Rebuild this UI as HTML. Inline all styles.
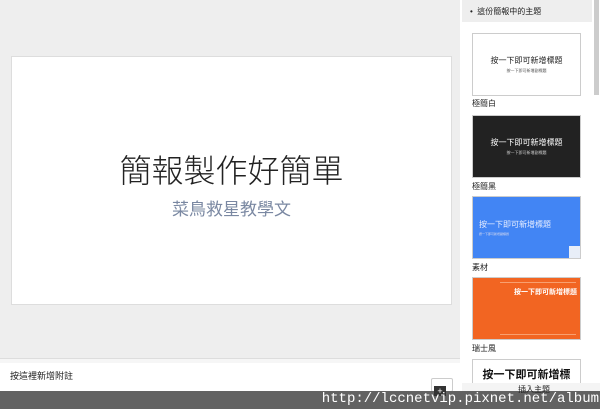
<!DOCTYPE html>
<html><head><meta charset="utf-8"><style>
*{margin:0;padding:0;box-sizing:border-box}
body{width:600px;height:409px;overflow:hidden;position:relative;background:#eee;font-family:"Liberation Sans","Noto Sans CJK TC",sans-serif}
.abs{position:absolute}
.th{position:absolute;left:472px;width:109px;height:63px;border:1px solid #ccc;display:flex;flex-direction:column;align-items:center;justify-content:center}
.lbl{position:absolute;left:472px;font-size:8px;color:#222}
</style></head><body>
<div class="abs" style="left:0;top:0;width:460px;height:362px;background:#eee"></div>
<div class="abs" style="left:11px;top:56px;width:441px;height:249px;background:#fff;border:1px solid #ddd"></div>
<div class="abs" style="left:11px;top:148px;width:441px;text-align:center;font-size:32px;color:#222;font-family:'Noto Sans CJK TC',sans-serif;font-weight:300;line-height:42px">簡報製作好簡單</div>
<div class="abs" style="left:11px;top:198px;width:441px;text-align:center;font-size:17px;color:#7a88a2;line-height:24px">菜鳥救星教學文</div>
<div class="abs" style="left:0;top:358px;width:460px;height:5px;background:#f6f6f6;border-top:1px solid #ddd"></div>
<div class="abs" style="left:0;top:363px;width:460px;height:28px;background:#fff"></div>
<div class="abs" style="left:10px;top:369px;font-size:9px;color:#222">按這裡新增附註</div>
<div class="abs" style="left:431px;top:378px;width:22px;height:14px;background:#fff;border:1px solid #ccc;border-radius:2px"></div>
<div class="abs" style="left:460px;top:0;width:140px;height:392px;background:#fff"></div>
<div class="abs" style="left:462px;top:0;width:130px;height:22px;background:#eee"></div>
<div class="abs" style="left:470px;top:6px;font-size:8px;color:#222">•&nbsp; 這份簡報中的主題</div>
<div class="abs" style="left:594px;top:0;width:5px;height:95px;background:#ccc"></div>
<div class="th" style="top:33px;background:#fff"><div style="font-size:8px;color:#222">按一下即可新增標題</div><div style="font-size:4px;color:#555;margin-top:2px">按一下即可新增副標題</div></div>
<div class="lbl" style="top:98px">極簡白</div>
<div class="th" style="top:115px;background:#222"><div style="font-size:8px;color:#fff">按一下即可新增標題</div><div style="font-size:4px;color:#ccc;margin-top:2px">按一下即可新增副標題</div></div>
<div class="lbl" style="top:181px">極簡黑</div>
<div class="th" style="top:196px;background:#4285f4;align-items:flex-start;padding-left:6px"><div style="font-size:8px;color:#e8eeff">按一下即可新增標題</div><div style="font-size:3px;color:#dde;margin-top:2px">按一下即可新增副標題</div></div>
<div class="abs" style="left:569px;top:246px;width:11px;height:12px;background:#e8eef8"></div>
<div class="lbl" style="top:262px">素材</div>
<div class="th" style="top:277px;background:#f26522;align-items:flex-start;padding-left:41px;justify-content:flex-start;padding-top:9px"><div style="font-size:7px;color:#fff;font-weight:bold;white-space:nowrap">按一下即可新增標題</div></div>
<div class="abs" style="left:500px;top:282px;width:76px;height:1px;background:#f8a070"></div>
<div class="abs" style="left:500px;top:334px;width:76px;height:1px;background:#f8a070"></div>
<div class="lbl" style="top:343px">瑞士風</div>
<div class="th" style="top:359px;height:40px;background:#fff;justify-content:flex-start;padding-top:6px"><div style="font-size:11px;color:#111;font-weight:bold;white-space:nowrap">按一下即可新增標</div></div>
<div class="abs" style="left:462px;top:383px;width:138px;height:8px;background:#f4f4f4"></div>
<div class="abs" style="left:0;top:391px;width:600px;height:18px;background:#626262"></div>
<div class="abs" style="left:518px;top:384px;font-size:8px;color:#222">插入主題</div>
<div class="abs" style="left:434px;top:386px;width:12px;height:10px;background:#333;color:#fff;font-size:9px;line-height:10px;text-align:center">+</div>
<div class="abs" style="right:1px;top:391px;font-family:'Liberation Mono',monospace;font-size:14px;color:#fff;line-height:17px">http://lccnetvip.pixnet.net/album</div>
</body></html>
